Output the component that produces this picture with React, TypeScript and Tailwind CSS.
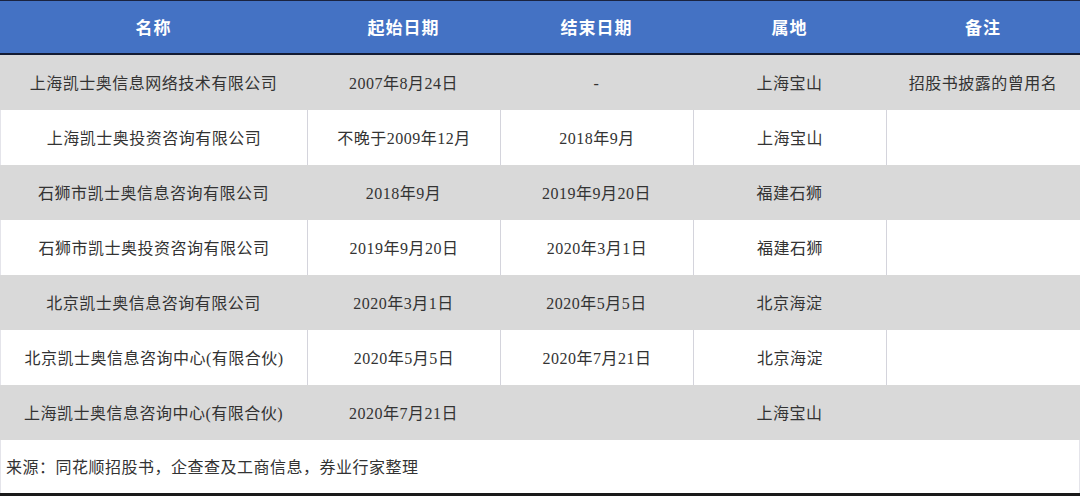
import React from 'react';

const rows: string[][] = [
  ['上海凯士奥信息网络技术有限公司', '2007年8月24日', '-', '上海宝山', '招股书披露的曾用名'],
  ['上海凯士奥投资咨询有限公司', '不晚于2009年12月', '2018年9月', '上海宝山', ''],
  ['石狮市凯士奥信息咨询有限公司', '2018年9月', '2019年9月20日', '福建石狮', ''],
  ['石狮市凯士奥投资咨询有限公司', '2019年9月20日', '2020年3月1日', '福建石狮', ''],
  ['北京凯士奥信息咨询有限公司', '2020年3月1日', '2020年5月5日', '北京海淀', ''],
  ['北京凯士奥信息咨询中心(有限合伙)', '2020年5月5日', '2020年7月21日', '北京海淀', ''],
  ['上海凯士奥信息咨询中心(有限合伙)', '2020年7月21日', '', '上海宝山', ''],
];

const headers = ['名称', '起始日期', '结束日期', '属地', '备注'];

const grid = 'grid grid-cols-[307px_193px_193px_193px_194px]';

export default function App() {
  return (
    <div
      className="w-[1080px] h-[496px] bg-white overflow-hidden"
      style={{ fontFamily: '"Liberation Serif", "Noto Sans CJK SC", serif' }}
    >
      <div className="border-t border-[#1a2340]">
        <div className={`${grid} h-[52px] bg-[#4472c4] text-white text-[17px] font-bold`}>
          {headers.map((h) => (
            <div key={h} className="flex items-center justify-center pt-[3px] tracking-[1px]">
              {h}
            </div>
          ))}
        </div>
        <div className="h-[2px] bg-[#141c33]" />
      </div>

      {rows.map((row, i) => {
        const gray = i % 2 === 0;
        return (
          <div
            key={i}
            className={`${grid} h-[55px] text-[16px] tracking-[0.5px] text-[#333333] ${gray ? 'bg-[#d9d9d9]' : 'bg-white'}`}
          >
            {row.map((cell, j) => (
              <div
                key={j}
                className={`flex items-center justify-center pt-[2px] whitespace-nowrap ${
                  !gray && j > 0 ? 'border-l border-[#d4d4dc]' : ''
                } ${!gray && j === 0 ? 'border-l border-[#e4e4ea]' : ''}`}
              >
                {cell}
              </div>
            ))}
          </div>
        );
      })}

      <div className="h-[53px] flex items-center pl-[5px] pt-[3px] text-[16px] tracking-[0.5px] text-[#333333] border-l border-r border-[#e4e4ea]">
        来源：同花顺招股书，企查查及工商信息，券业行家整理
      </div>
      <div className="h-[3px] bg-[#1a1a1a]" />
    </div>
  );
}
